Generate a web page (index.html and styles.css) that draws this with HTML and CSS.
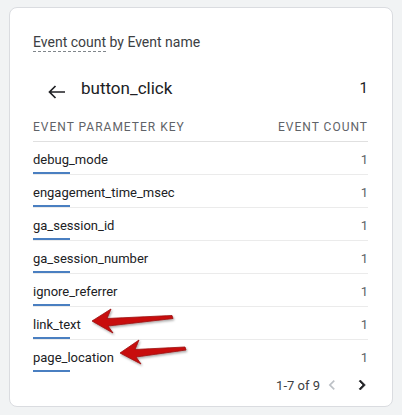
FILE: index.html
```html
<!DOCTYPE html>
<html lang="en">
<head>
  <meta charset="UTF-8" />
  <meta name="viewport" content="width=device-width, initial-scale=1.0" />
  <title>Event count by Event name</title>
  <link rel="stylesheet" href="styles.css">
</head>
<body>
  <div class="card">
    <div class="card-title"><span class="metric">Event count</span> by Event name</div>

    <div class="back-row">
      <svg class="back-icon" width="20" height="20" viewBox="0 0 20 20">
        <path d="M18 10H2.5 M8.5 4L2.5 10l6 6" fill="none" stroke="#202124" stroke-width="1.7"/>
      </svg>
      <span class="event-name">button_click</span>
      <span class="event-total">1</span>
    </div>

    <div class="table-head">
      <span>Event parameter key</span>
      <span>Event count</span>
    </div>

    <div class="rows">
      <div class="row"><div class="key"><span>debug_mode</span><div class="bar"></div></div><span class="count">1</span></div>
      <div class="row"><div class="key"><span>engagement_time_msec</span><div class="bar"></div></div><span class="count">1</span></div>
      <div class="row"><div class="key"><span>ga_session_id</span><div class="bar"></div></div><span class="count">1</span></div>
      <div class="row"><div class="key"><span>ga_session_number</span><div class="bar"></div></div><span class="count">1</span></div>
      <div class="row"><div class="key"><span>ignore_referrer</span><div class="bar"></div></div><span class="count">1</span></div>
      <div class="row"><div class="key"><span>link_text</span><div class="bar"></div></div><span class="count">1</span></div>
      <div class="row"><div class="key"><span>page_location</span><div class="bar"></div></div><span class="count">1</span></div>
    </div>

    <div class="pager">
      <span class="pager-text">1-7 of 9</span>
      <svg width="20" height="20" viewBox="0 0 24 24">
        <path d="M15.41 7.41L14 6l-6 6 6 6 1.41-1.41L10.83 12z" fill="#bdc1c6"/>
      </svg>
      <svg width="20" height="20" viewBox="0 0 24 24">
        <path d="M10 6L8.59 7.41 13.17 12l-4.58 4.59L10 18l6-6z" fill="#202124" stroke="#202124" stroke-width="0.8"/>
      </svg>
    </div>
  </div>

  <!-- annotation arrows -->
  <svg class="marks" width="402" height="415" viewBox="0 0 402 415">
    <defs>
      <filter id="shadow" x="-20%" y="-40%" width="140%" height="180%">
        <feDropShadow dx="1" dy="1.5" stdDeviation="1" flood-color="#000" flood-opacity="0.35"/>
      </filter>
    </defs>
    <path d="M92 321 L111 309 L107 318.5 L172 315.5 L173 318.5 L108 326 L113 333 Z" fill="#c8100f" stroke="#9b0a0a" stroke-width="0.8" stroke-linejoin="round" filter="url(#shadow)"/>
    <path d="M120 353 L139 340 L135 349.5 L185 347 L186 350 L136 357 L141 364 Z" fill="#c8100f" stroke="#9b0a0a" stroke-width="0.8" stroke-linejoin="round" filter="url(#shadow)"/>
  </svg>
</body>
</html>
```

FILE: styles.css
```css
body {
  margin: 0;
  padding: 7px 9px 8px;
  background: #f1f3f4;
  font-family: Roboto, "Liberation Sans", Arial, sans-serif;
  color: #202124;
  position: relative;
}
.card {
  background: #fff;
  border: 1px solid #dadce0;
  border-radius: 8px;
  padding: 24px 24px 14px 23px;
  box-sizing: border-box;
  height: 400px;
}
.card-title {
  font-size: 14px;
  line-height: 20px;
  color: #3c4043;
}
.metric {
  border-bottom: 1px dashed #80868b;
  padding-bottom: 1px;
}
.back-row {
  display: flex;
  align-items: center;
  height: 40px;
  margin-top: 16px;
}
.back-icon {
  margin-left: 14px;
  margin-right: 14px;
  position: relative;
  top: 4px;
}
.event-name {
  font-size: 17px;
  flex: 1;
}
.event-total {
  font-size: 15px;
}
.table-head {
  display: flex;
  justify-content: space-between;
  font-size: 12px;
  line-height: 14px;
  letter-spacing: 1px;
  text-transform: uppercase;
  color: #5f6368;
  padding: 12px 0 7px;
  border-bottom: 1px solid #e0e0e0;
}
.row {
  display: flex;
  justify-content: space-between;
  font-size: 13px;
  border-bottom: 1px solid #ebebeb;
  padding-top: 10px;
}
.row:last-child {
  border-bottom: none;
}
.key span {
  display: block;
  line-height: 16px;
}
.bar {
  width: 37px;
  height: 2px;
  margin-top: 4px;
  background: #4a7fc1;
}
.count {
  line-height: 16px;
  color: #5f6368;
}
.pager {
  display: flex;
  justify-content: flex-end;
  align-items: center;
  gap: 10px;
  margin-top: 3px;
  margin-right: -4px;
  height: 20px;
}
.pager-text {
  font-size: 13px;
  color: #3c4043;
  margin-right: -8px;
}
.marks {
  position: absolute;
  left: 0;
  top: 0;
  pointer-events: none;
}
```
